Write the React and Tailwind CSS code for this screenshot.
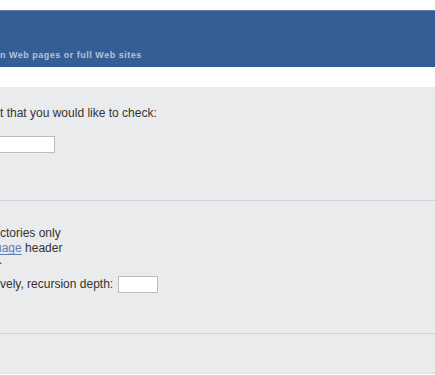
import React from "react";

export default function App() {
  return (
    <div className="w-[435px] h-[375px] overflow-hidden bg-white font-['Liberation_Sans',Arial,sans-serif] text-[12px] leading-[15px] text-[#333]">
      <div className="h-[10px]" />
      <header className="h-[57px] bg-[#365e96] border-t border-[#6683ad]">
        <p className="pt-[39px] text-[9px] leading-[11px] font-bold tracking-[0.5px] text-[#b7c3d8] whitespace-nowrap">
          n Web pages or full Web sites
        </p>
      </header>
      <div className="h-[20px]" />
      <main className="bg-[#eaebed]">
        <section className="h-[114px] border-b border-[#d2d3d6] pt-[19px]">
          <p className="whitespace-nowrap">t that you would like to check:</p>
          <input
            type="text"
            className="block mt-[15px] -ml-[10px] w-[65px] h-[17px] bg-white border border-[#bcbcbc] outline-none"
          />
        </section>
        <section className="h-[133px] border-b border-[#d2d3d6] pt-[25px]">
          <p className="whitespace-nowrap">ctories only</p>
          <p className="whitespace-nowrap -ml-[5px]">
            <a href="#" className="text-[#5b7db3] underline underline-offset-2">uage</a> header
          </p>
          <p className="leading-[8px] -ml-[1px]">.</p>
          <div className="mt-[12px] flex items-center gap-[5px] whitespace-nowrap">
            <span>vely, recursion depth:</span>
            <input
              type="text"
              className="w-[40px] h-[17px] bg-white border border-[#bcbcbc] outline-none"
            />
          </div>
        </section>
        <section className="h-[40px] border-b border-[#dfe0e3]" />
      </main>
    </div>
  );
}
